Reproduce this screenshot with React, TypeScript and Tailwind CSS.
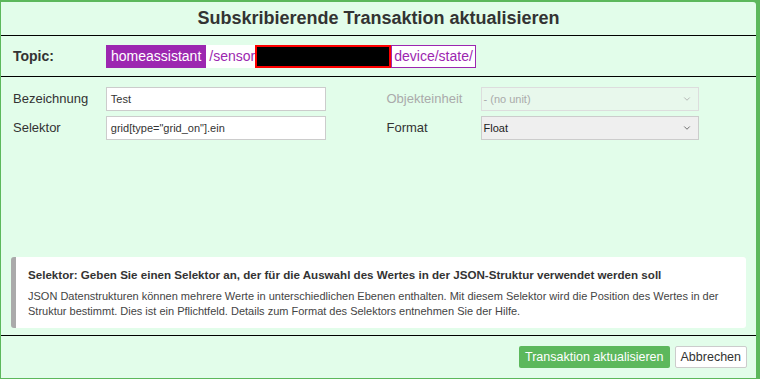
import { ChevronDown } from "lucide-react";

export default function App() {
  return (
    <div className="h-[379px] w-[760px] bg-[#5cb85c] pb-px pl-px pr-1 pt-[2px] font-['Liberation_Sans',Arial,sans-serif] text-[#333]">
      <div className="flex h-full flex-col rounded-tr-[3px] bg-[#e2fdea]">
        <h1 className="flex h-[33px] items-center justify-center text-[18px] font-bold text-[#333]">
          Subskribierende Transaktion aktualisieren
        </h1>
        <div className="flex h-[42px] items-center border-y border-black pl-3">
          <span className="w-[93px] text-[14px] font-bold">Topic:</span>
          <div className="flex h-[23px] items-stretch text-[14px]">
            <span className="flex items-center bg-[#9c27b0] px-[5px] text-white">homeassistant</span>
            <span className="flex items-center bg-white pl-[3px] text-[#9c27b0]">/sensor</span>
            <span className="w-[136px] border-2 border-[#f00] bg-black" />
            <span className="flex items-center border border-[#9c27b0] bg-white px-[2px] text-[#9c27b0]">device/state/</span>
          </div>
        </div>
        <div className="grid grid-cols-2 gap-x-[61px] gap-y-[5px] pl-3 pr-[57px] pt-[10px] text-[13px]">
          <div className="flex items-center">
            <span className="w-[93px]">Bezeichnung</span>
            <div className="flex h-6 w-[220px] items-center border border-[#ccc] bg-white px-1 text-[11px]">Test</div>
          </div>
          <div className="flex items-center">
            <span className="w-[94px] text-[#aaa]">Objekteinheit</span>
            <div className="flex h-6 flex-1 items-center justify-between border border-[#ddd] bg-[#e8f8ec] px-[2px] text-[11px] text-[#aaa]">
              <span>- (no unit)</span>
              <ChevronDown size={10} className="mr-1 text-[#aaa]" />
            </div>
          </div>
          <div className="flex items-center">
            <span className="w-[93px]">Selektor</span>
            <div className="flex h-6 w-[220px] items-center border border-[#ccc] bg-white px-1 text-[11px]">grid[type="grid_on"].ein</div>
          </div>
          <div className="flex items-center">
            <span className="w-[94px]">Format</span>
            <div className="flex h-6 flex-1 items-center justify-between border border-[#ccc] bg-[#efefef] px-[2px] text-[11px] text-[#222]">
              <span>Float</span>
              <ChevronDown size={10} className="mr-1 text-[#555]" />
            </div>
          </div>
        </div>
        <div className="flex-1" />
        <div className="mx-[10px] mb-[7px] rounded-[3px] border-l-[5px] border-[#aaa] bg-white pb-[9px] pl-3 pr-3 pt-[10px] text-[#333]">
          <p className="whitespace-nowrap text-[11.6px] font-bold leading-[16px]">
            Selektor: Geben Sie einen Selektor an, der für die Auswahl des Wertes in der JSON-Struktur verwendet werden soll
          </p>
          <p className="mt-[6px] text-[11px] leading-[15px] text-[#444]">
            JSON Datenstrukturen können mehrere Werte in unterschiedlichen Ebenen enthalten. Mit diesem Selektor wird die Position des Wertes in der Struktur bestimmt. Dies ist ein Pflichtfeld. Details zum Format des Selektors entnehmen Sie der Hilfe.
          </p>
        </div>
        <div className="flex h-[43px] items-center justify-end gap-[5px] border-t border-black pr-[9px] text-[12.5px]">
          <button type="button" className="h-[22px] rounded-[2px] bg-[#5cb85c] px-[6px] text-white">Transaktion aktualisieren</button>
          <button type="button" className="h-[22px] rounded-[2px] border border-[#ccc] bg-white px-[5px] text-[#333]">Abbrechen</button>
        </div>
      </div>
    </div>
  );
}
